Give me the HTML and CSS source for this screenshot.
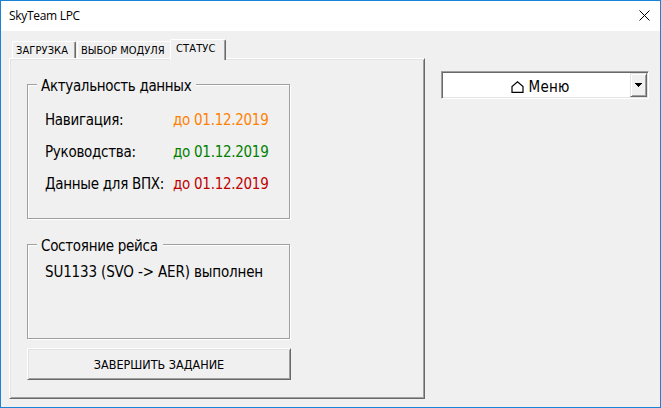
FILE: index.html
```html
<!DOCTYPE html>
<html lang="ru">
<head>
<meta charset="utf-8">
<title>SkyTeam LPC</title>
<link rel="stylesheet" href="styles.css">
</head>
<body>
<div class="window">
  <header class="titlebar">
    <span class="title">SkyTeam LPC</span>
    <svg class="close" width="11" height="11" viewBox="0 0 11 11"><path d="M.5.5l10 10M10.5.5l-10 10"/></svg>
  </header>
  <main class="content">
    <section class="tabs">
      <nav class="tablist">
        <div class="tab tab-load">ЗАГРУЗКА</div>
        <div class="tab tab-module">ВЫБОР МОДУЛЯ</div>
        <div class="tab active">СТАТУС</div>
      </nav>
      <div class="page">
        <section class="group validity">
          <h2 class="legend">Актуальность данных</h2>
          <div class="row"><span class="label">Навигация:</span><span class="date orange">до 01.12.2019</span></div>
          <div class="row"><span class="label">Руководства:</span><span class="date green">до 01.12.2019</span></div>
          <div class="row"><span class="label">Данные для ВПХ:</span><span class="date red">до 01.12.2019</span></div>
        </section>
        <section class="group flight">
          <h2 class="legend">Состояние рейса</h2>
          <div class="row flight-row">SU1133 (SVO -&gt; AER) выполнен</div>
        </section>
        <button class="finish">ЗАВЕРШИТЬ ЗАДАНИЕ</button>
      </div>
    </section>
    <div class="combo">
      <div class="combo-value">
        <svg width="13" height="12" viewBox="0 0 13 12"><path d="M1 11.300V5.600L6.500.800 12 5.600v5.700z"/></svg>
        <span>Меню</span>
      </div>
      <div class="combo-button"><svg width="7" height="4" viewBox="0 0 7 4" shape-rendering="crispEdges"><path d="M0 0h7v1H6v1H5v1H4v1H3V3H2V2H1V1H0z"/></svg></div>
    </div>
  </main>
</div>
</body>
</html>
```
FILE: styles.css
```css
* { box-sizing: border-box; }
body { margin: 0; background: #f0f0f0; color: #000; }
.window {
  width: 661px; height: 408px;
  border: 1px solid #1883d7;
  background: #f0f0f0;
  font: 15px/20px "DejaVu Sans Condensed", "DejaVu Sans", sans-serif;
  font-stretch: condensed;
  white-space: nowrap;
}
.titlebar {
  height: 30px; background: #fff;
  display: flex; align-items: center; justify-content: space-between;
  padding: 0 10px 0 8px;
}
.title { font: 12px/16px "Open Sans", sans-serif; letter-spacing: -.3px; }
.close { fill: none; stroke: #000; stroke-width: 1; margin-top: -2px; }
.content { display: flex; align-items: flex-start; gap: 16px; padding: 8px 0 0 8px; }
.tabs { width: 416px; }
.tablist {
  height: 19px; display: flex; align-items: flex-end;
  padding-left: 3px;
  font-size: 11px; line-height: 17px;
}
.tab {
  height: 17px; padding-left: 3px;
  border-top: 1px solid #fff; border-left: 1px solid #fff;
  border-radius: 2px 2px 0 0;
}
.tab-load { width: 64px; border-right: 1px solid #696969; box-shadow: inset -1px 0 #a0a0a0; letter-spacing: .1px; }
.tab-module { width: 94px; margin-left: 1px; }
.active {
  position: relative; z-index: 1;
  width: 56px; height: 21px; margin-bottom: -2px; margin-left: -1px; padding-left: 5px;
  background: #f0f0f0; border-right: 1px solid #696969;
  box-shadow: inset -1px 0 #a0a0a0; line-height: 18px; letter-spacing: .15px;
}
.page {
  height: 341px; padding: 25px 0 0 17px;
  border: 1px solid; border-color: #fff #696969 #696969 #fff;
  box-shadow: inset 1px 1px #e3e3e3, inset -1px -1px #a0a0a0;
}
.group {
  width: 263px; padding: 0 0 0 17px;
  border: 1px solid #a0a0a0;
  box-shadow: 1px 1px #fff, inset 1px 1px #fff;
}
.validity { height: 135px; }
.flight { height: 95px; margin-top: 25px; }
.legend {
  position: relative;
  width: max-content; height: 20px; margin: -9px 0 0 -8px; padding: 0 5px 0 4px;
  background: #f0f0f0; font: inherit; letter-spacing: -.33px;
}
.flight .legend { letter-spacing: -.28px; }
.row { display: flex; height: 20px; margin-bottom: 12px; letter-spacing: -.28px; }
.legend + .row { margin-top: 14px; }
.legend + .flight-row { margin-top: 6px; letter-spacing: -.15px; }
.label { width: 128px; }
.orange { color: #ff8000; }
.green { color: #008000; }
.red { color: #c00000; }
.finish {
  display: block; width: 264px; height: 32px; margin: 9px 0 0; padding: 2px 0 0;
  background: #f0f0f0; color: #000;
  border: 1px solid; border-color: #fff #696969 #696969 #fff;
  box-shadow: inset 1px 1px #e3e3e3, inset -1px -1px #a0a0a0;
  font: 12.5px/18px "DejaVu Sans Condensed", "DejaVu Sans", sans-serif;
  font-stretch: condensed;
}
.combo {
  width: 208px; height: 28px; margin-top: 32px;
  display: flex; background: #fff;
  border: 1px solid; border-color: #a0a0a0 #fff #fff #a0a0a0;
  box-shadow: inset 1px 1px #696969, inset -1px -1px #e3e3e3;
}
.combo-value {
  flex: 1; display: flex; align-items: center; justify-content: center; gap: 5px;
  padding: 3px 0 0 8px; letter-spacing: .2px;
}
.combo-value svg { fill: none; stroke: #000; stroke-width: 1.2; }
.combo-button {
  width: 17px; margin: 1px 1px 1px 0; background: #f0f0f0;
  display: flex; align-items: center; justify-content: center;
  border: 1px solid; border-color: #e3e3e3 #696969 #696969 #e3e3e3;
  box-shadow: inset 1px 1px #fff, inset -1px -1px #a0a0a0;
}
```
